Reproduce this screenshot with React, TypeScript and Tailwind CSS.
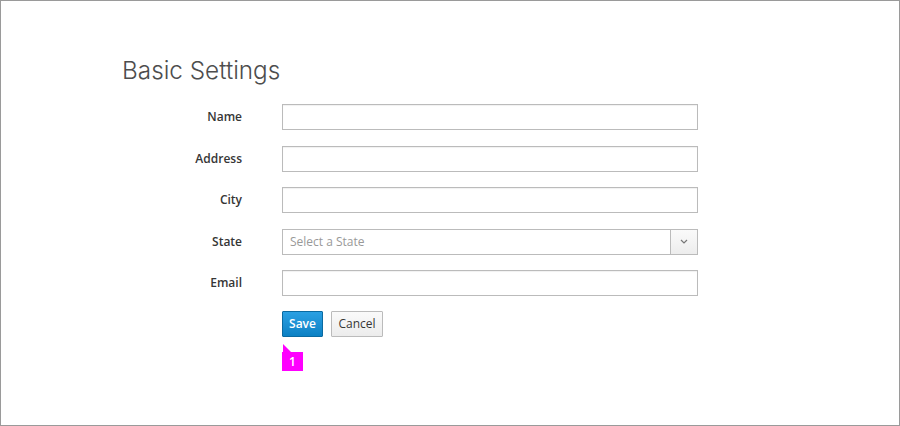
import React from "react";

const fields = ["Name", "Address", "City", "State", "Email"];

export default function App() {
  return (
    <div
      className="w-[900px] h-[426px] border border-[#9a9a9a] bg-white box-border"
      style={{ fontFamily: '"Open Sans", "Liberation Sans", sans-serif' }}
    >
      <div className="pl-[121px] pt-[52px]">
        <h1
          className="text-[24.3px] font-light text-[#4d4d4d] leading-[34px] m-0"
          style={{ fontFamily: 'Inter, "Open Sans", sans-serif' }}
        >
          Basic Settings
        </h1>
      </div>
      <div className="mt-[17px] grid grid-cols-[241px_416px] gap-x-[40px] gap-y-[15.5px]">
        {fields.map((f) => (
          <React.Fragment key={f}>
            <div className="h-[26px] flex items-center justify-end text-[12px] font-semibold text-[#363636]">{f}</div>
            {f === "State" ? (
              <div className="h-[26px] flex border border-[#bbbbbb] bg-white">
                <div className="flex-1 flex items-center pl-[7px] text-[12px] text-[#999999]">Select a State</div>
                <div className="w-[27px] border-l border-[#bbbbbb] bg-gradient-to-b from-[#fafafa] to-[#ededed] flex items-center justify-center">
                  <svg width="8" height="5" viewBox="0 0 8 5">
                    <path d="M1 1 L4 4 L7 1" stroke="#777" strokeWidth="1.2" fill="none" />
                  </svg>
                </div>
              </div>
            ) : (
              <div className="h-[26px] border border-[#bbbbbb] bg-white shadow-[inset_0_1px_1px_rgba(0,0,0,0.06)]" />
            )}
          </React.Fragment>
        ))}
        <div />
        <div className="flex gap-[8px] -mt-[0.5px]">
          <button className="h-[26px] w-[41px] text-[12px] font-semibold text-white border border-[#0a6aa1] bg-gradient-to-b from-[#2aa0e3] to-[#0b81c4] rounded-[1px]">
            Save
          </button>
          <button className="h-[26px] w-[52px] text-[12px] text-[#363636] border border-[#bbbbbb] bg-gradient-to-b from-[#fafafa] to-[#ececec] rounded-[1px]">
            Cancel
          </button>
        </div>
      </div>
      <div className="ml-[281px] mt-[7px] relative w-[21px]">
        <svg width="9" height="8" viewBox="0 0 9 8" className="block ml-[1px]">
          <polygon points="0,0 0,8 8,8" fill="#ff00ff" />
        </svg>
        <div className="w-[21px] h-[19px] bg-[#ff00ff] text-white text-[12px] font-semibold flex items-center justify-center leading-none">1</div>
      </div>
    </div>
  );
}
